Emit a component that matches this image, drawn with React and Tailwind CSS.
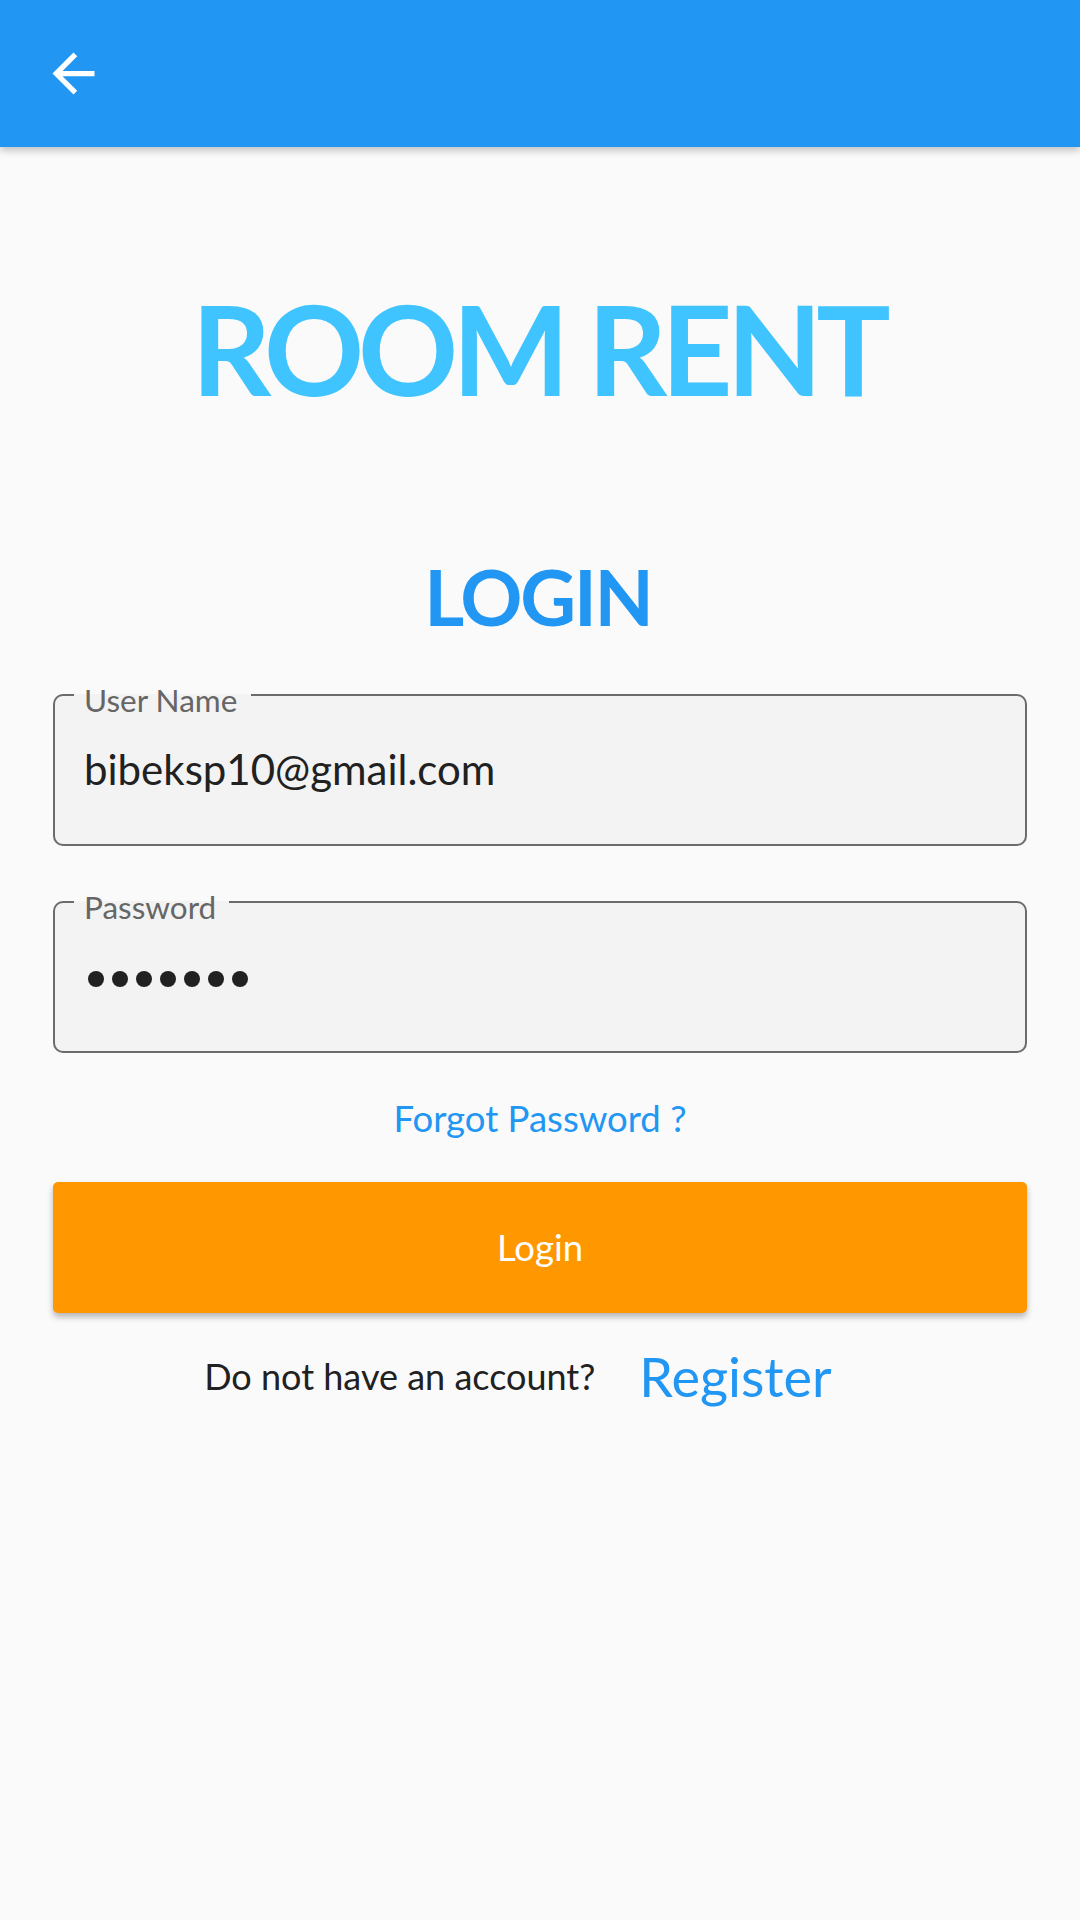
export default function App() {
  return (
    <div className="min-h-[1920px] w-[1080px] bg-[#fafafa] font-['Lato','Liberation_Sans',sans-serif]">
      <header className="flex h-[147px] items-center bg-[#2196f3] pl-[42px] shadow-[0_3px_8px_rgba(0,0,0,0.25)]">
        <svg viewBox="0 0 24 24" className="h-[63px] w-[63px] fill-white">
          <path d="M20 11H7.83l5.59-5.59L12 4l-8 8 8 8 1.41-1.41L7.83 13H20v-2z" />
        </svg>
      </header>

      <main className="flex flex-col px-[53px]">
        <h1 className="mt-[139px] pr-[4px] text-center text-[124px] font-bold leading-none tracking-[-6px] text-[#40c4ff]">
          ROOM RENT
        </h1>
        <h2 className="mt-[148px] pr-[4px] text-center text-[77px] font-bold leading-none tracking-[-2.2px] text-[#2196f3]">
          LOGIN
        </h2>

        <Field label="User Name" labelWidth="w-[177px]" className="mt-[59px]">
          <div className="pl-[29px] pt-[52px] text-[42px] leading-none text-[#212121]">bibeksp10@gmail.com</div>
        </Field>

        <Field label="Password" labelWidth="w-[155px]" className="mt-[55px]">
          <div className="flex gap-[8px] pl-[33px] pt-[68px]">
            {[0, 1, 2, 3, 4, 5, 6].map((i) => (
              <span key={i} className="h-[16px] w-[16px] rounded-full bg-[#212121]" />
            ))}
          </div>
        </Field>

        <p className="mt-[47px] text-center text-[36.5px] leading-none text-[#2196f3]">Forgot Password ?</p>

        <button className="mt-[45px] flex h-[131px] items-center justify-center rounded-[5px] bg-[#ff9800] text-[36.5px] text-white shadow-[0_4px_6px_rgba(0,0,0,0.28)]">
          Login
        </button>

        <div className="mt-[32px] flex items-center justify-center gap-[44px] pr-[44px] leading-[1.2]">
          <span className="text-[36px] text-[#212121]">Do not have an account?</span>
          <span className="text-[54px] text-[#2196f3]">Register</span>
        </div>
      </main>
    </div>
  );
}

function Field({ label, labelWidth, className, children }) {
  return (
    <div className={`relative h-[152px] rounded-[10px] border-2 border-[#6b6b6b] bg-[#f3f3f3] ${className}`}>
      <span className={`absolute -top-[2px] left-[19px] h-[2px] bg-[#f3f3f3] ${labelWidth}`} />
      <span className="absolute -top-[11px] left-[29px] text-[31.5px] leading-none text-[#666666]">{label}</span>
      {children}
    </div>
  );
}
